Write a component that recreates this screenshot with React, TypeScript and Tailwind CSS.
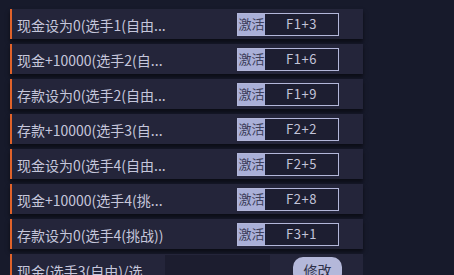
import React from "react";

const rows = [
  { t: "现金设为0(选手1(自由...", k: "F1+3" },
  { t: "现金+10000(选手2(自...", k: "F1+6" },
  { t: "存款设为0(选手2(自由...", k: "F1+9" },
  { t: "存款+10000(选手3(自...", k: "F2+2" },
  { t: "现金设为0(选手4(自由...", k: "F2+5" },
  { t: "现金+10000(选手4(挑...", k: "F2+8" },
  { t: "存款设为0(选手4(挑战))", k: "F3+1" },
];

export default function App() {
  return (
    <div
      className="w-[454px] h-[275px] overflow-hidden bg-[#171a2b] pt-[9px] pl-[10px] flex flex-col gap-[5px]"
      style={{ fontFamily: '"Noto Sans CJK SC", "Noto Sans", sans-serif' }}
    >
      {rows.map((r) => (
        <div
          key={r.k}
          className="w-[353px] h-[30px] shrink-0 flex items-center bg-[#24253a] border-l-2 border-[#e0622a] shadow-[0_3px_4px_rgba(0,0,0,0.55)]"
        >
          <div className="flex-1 pl-[5px] pt-[2px] text-[14px] text-[#c6c7dc] whitespace-nowrap leading-[20px]">
            {r.t}
          </div>
          <div className="mr-[24px] w-[102px] h-[23px] flex border border-[#b3b7da] bg-[#1d1e31]">
            <div className="w-[27px] bg-[#aab0d8] text-[#3d3f5c] text-[13px] flex items-center justify-center leading-[20px] whitespace-nowrap">
              激活
            </div>
            <div className="flex-1 flex items-center justify-center text-[13px] text-[#c3c4da] leading-[20px] tracking-[0.5px]">
              {r.k}
            </div>
          </div>
        </div>
      ))}
      <div className="w-[353px] h-[30px] shrink-0 flex bg-[#24253a] border-l-2 border-[#e0622a]">
        <div className="w-[153px] pl-[5px] pt-[7px] text-[14px] text-[#c6c7dc] whitespace-nowrap leading-[20px]">
          现金(选手3(自由)/选...
        </div>
        <div className="w-[105px] mt-[1px] bg-[#1c1d2f]" />
        <div className="ml-[23px] mt-[3px] w-[49px] h-[26px] rounded-[10px] bg-[#b4b8da] text-[#2e3048] text-[14px] flex items-center justify-center leading-[20px]">
          修改
        </div>
      </div>
    </div>
  );
}
